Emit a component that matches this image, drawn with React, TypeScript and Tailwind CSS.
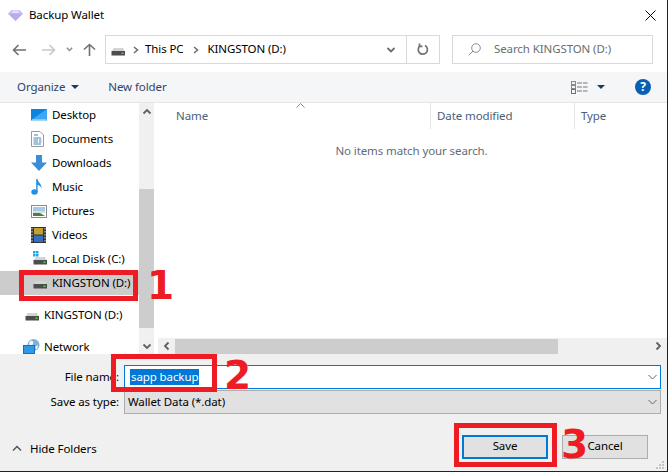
import React from "react";

const Chev = ({ d, className = "", stroke = "#6d6d6d", w = 10, h = 10, sw = 1.6 }: { d: string; className?: string; stroke?: string; w?: number; h?: number; sw?: number }) => (
  <svg width={w} height={h} viewBox="0 0 10 10" className={className} fill="none" stroke={stroke} strokeWidth={sw}>
    <path d={d} />
  </svg>
);

const Drive = ({ windows = false }: { windows?: boolean }) => (
  <svg width="18" height="16" viewBox="0 0 18 16">
    {windows && (
      <g fill="#1ea7e8">
        <rect x="2" y="0" width="2.5" height="2.5" />
        <rect x="5" y="0" width="2.5" height="2.5" />
        <rect x="2" y="3" width="2.5" height="2.5" />
        <rect x="5" y="3" width="2.5" height="2.5" />
      </g>
    )}
    <path d="M3 9 L4.5 6 H14 L15.5 9 Z" fill="#d4d4d4" />
    <rect x="2.5" y="9" width="13.5" height="4.5" fill="#4d4d4d" />
    <rect x="12.5" y="10.5" width="2" height="1.5" fill="#3fdc4a" />
  </svg>
);

const DesktopIcon = () => (
  <svg width="16" height="12" viewBox="0 0 16 12">
    <rect width="16" height="11.5" fill="#0a84e0" />
    <path d="M0 11 L16 0 V11 Z" fill="#39a9f4" />
    <rect x="1" y="10.5" width="14" height="1" fill="#cfeaff" />
  </svg>
);
const DocsIcon = () => (
  <svg width="13" height="16" viewBox="0 0 13 16">
    <path d="M.5.5 H9 L12.5 4 V15.5 H.5 Z" fill="#fff" stroke="#9a9a9a" />
    <path d="M3 4 H7 M2.5 7 H10 M2.5 9 H7 M8 9 H10.5 M2.5 11 H7 M8 11 H10.5 M2.5 13 H10" stroke="#3f87b8" />
  </svg>
);
const DownIcon = () => (
  <svg width="16" height="16" viewBox="0 0 16 16">
    <path d="M5 0 H11 V7.5 H16 L8 16 L0 7.5 H5 Z" fill="#3a8ed8" />
  </svg>
);
const MusicIcon = () => (
  <svg width="12" height="16" viewBox="0 0 12 16">
    <ellipse cx="3.5" cy="13" rx="3.2" ry="2.8" fill="#1e90e8" />
    <path d="M5.2 13 V0 H6.6 C7 4 11 5 10.6 9.5 C10 7 8 6.3 6.6 6 V13 Z" fill="#1e90e8" />
  </svg>
);
const PicIcon = () => (
  <svg width="16" height="13" viewBox="0 0 16 13">
    <rect x=".5" y=".5" width="15" height="12" fill="#fff" stroke="#8a8a8a" />
    <rect x="2" y="2" width="12" height="4" fill="#a9c9e8" />
    <rect x="2" y="6" width="12" height="2" fill="#d6e2c8" />
    <path d="M2 11 V8 L9 8 L14 11 Z" fill="#4e7a52" />
  </svg>
);
const VideoIcon = () => (
  <svg width="15" height="16" viewBox="0 0 15 16">
    <rect width="15" height="16" fill="#333" />
    <rect x="3" y="1" width="9" height="6.5" fill="#c0a030" />
    <rect x="3" y="8.5" width="9" height="6.5" fill="#2f6fc4" />
    <path d="M1 1 V15 M14 1 V15" stroke="#ddd" strokeWidth="1" strokeDasharray="1.5 1.5" />
  </svg>
);
const NetIcon = () => (
  <svg width="19" height="16" viewBox="0 0 19 16">
    <circle cx="10.5" cy="6" r="6" fill="#7fb0d8" />
    <path d="M7 2 C9 1 11 2 10 5 C9 7 6 7 6 5 Z M12 8 L15 6 L14 11 Z" fill="#f2f7fb" />
    <rect x=".5" y="6.5" width="11" height="8" fill="#2f9be8" stroke="#1b6fb4" />
    <rect x="3" y="15" width="6" height="1" fill="#1b6fb4" />
  </svg>
);
const Gem = () => (
  <svg width="15" height="11" viewBox="0 0 15 11">
    <path d="M3.5 0 H11.5 L15 3.5 L7.5 11 L0 3.5 Z" fill="#c9c3f5" />
    <path d="M0 3.5 H15 L7.5 11 Z" fill="#b6adee" />
    <path d="M5 0.5 H10 L11 3 H4 Z" fill="#e4e0fb" />
  </svg>
);

const NavRow = ({ icon, label, iconW = "pl-[31px]", gap = "w-[21px]", active = false, mb = "" }: { icon: React.ReactNode; label: string; iconW?: string; gap?: string; active?: boolean; mb?: string }) => (
  <div className={`flex h-6 shrink-0 items-center ${iconW} ${active ? "bg-[#cccccc]" : ""} ${mb}`}>
    <span className={`flex ${gap} shrink-0 items-center`}>{icon}</span>
    <span className="whitespace-nowrap text-black">{label}</span>
  </div>
);

const Annot = ({ className }: { className: string }) => (
  <div className={`pointer-events-none absolute border-[5px] border-[#ed1c24] ${className}`} />
);
const Digit = ({ children, className }: { children: string; className: string }) => (
  <div className={`pointer-events-none absolute font-['DejaVu_Sans',sans-serif] text-[39px] font-bold leading-none tracking-normal text-[#ed1c24] ${className}`}>{children}</div>
);

export default function App() {
  return (
    <div className="relative flex h-[472px] w-[668px] flex-col overflow-hidden border-r border-b border-[#222222] bg-white font-['Noto_Sans',sans-serif] text-[11.5px] leading-none tracking-[-0.1px]">
      {/* Title bar */}
      <div className="flex h-[30px] shrink-0 items-center pl-2 pr-[10px]">
        <Gem />
        <span className="ml-[6px] text-black">Backup Wallet</span>
        <svg width="11" height="11" viewBox="0 0 11 11" className="ml-auto mr-[1px]" stroke="#000" strokeWidth="1">
          <path d="M.5.5 L10.5 10.5 M10.5.5 L.5 10.5" />
        </svg>
      </div>

      {/* Navigation bar */}
      <div className="flex h-[42px] shrink-0 items-start pt-[5px] pl-3 pr-[14px]">
        <div className="flex h-[29px] w-[93px] items-center">
          <svg width="14" height="12" viewBox="0 0 14 12" fill="none" stroke="#707070" strokeWidth="1.6"><path d="M14 6 H1.5 M6.5 1 L1.5 6 L6.5 11" /></svg>
          <svg width="14" height="12" viewBox="0 0 14 12" fill="none" stroke="#c8c8c8" strokeWidth="1.6" className="ml-[16px]"><path d="M0 6 H12.5 M7.5 1 L12.5 6 L7.5 11" /></svg>
          <Chev d="M2 3 L5 6 L8 3" stroke="#8a8a8a" w={9} h={9} className="ml-[9px]" />
          <svg width="13" height="13" viewBox="0 0 13 13" fill="none" stroke="#707070" strokeWidth="1.6" className="ml-[9px]"><path d="M6.5 13 V1.5 M1 6.5 L6.5 1.5 L12 6.5" /></svg>
        </div>
        <div className="flex h-[29px] w-[335px] items-center border border-[#d9d9d9]">
          <span className="ml-[3px]"><Drive /></span>
          <Chev d="M3 2 L6.5 5 L3 8" stroke="#707070" w={10} h={10} className="ml-[4px]" />
          <span className="ml-[4px] pb-[2px] text-black">This PC</span>
          <Chev d="M3 2 L6.5 5 L3 8" stroke="#707070" w={10} h={10} className="ml-[7px]" />
          <span className="ml-[7px] pb-[2px] text-black">KINGSTON (D:)</span>
          <Chev d="M1.5 3 L5 6.5 L8.5 3" stroke="#6d6d6d" w={10} h={10} sw={1.8} className="ml-auto mr-[10px]" />
          <div className="flex h-full w-[33px] items-center justify-center border-l border-[#d9d9d9]">
            <svg width="12" height="13" viewBox="0 0 12 13" fill="none" stroke="#707070" strokeWidth="1.7"><path d="M8 2.5 A4.6 4.6 0 1 1 3.5 2.6 M2.5 0.5 V3.4 H5.500" /></svg>
          </div>
        </div>
        <div className="ml-[12px] flex h-[29px] flex-1 items-center border border-[#d9d9d9] pl-[15px] text-[#6d6d6d]">
          <svg width="13" height="13" viewBox="0 0 13 13" fill="none" stroke="#8c8c8c" strokeWidth="1"><circle cx="8" cy="5" r="4.3" /><path d="M5 8 L.7 12.3" /></svg>
          <span className="ml-[13px] pb-[2px]">Search KINGSTON (D:)</span>
        </div>
      </div>

      {/* Toolbar */}
      <div className="flex h-[31px] shrink-0 items-center border-b border-[#e5e5e5] bg-[#f5f6f7] pl-[17px] pr-[16px] text-[#2f4468]">
        <span>Organize</span>
        <svg width="8" height="4" viewBox="0 0 8 4" className="ml-[6px]"><path d="M0 0 H8 L4 4 Z" fill="#1e3a5f" /></svg>
        <span className="ml-[29px]">New folder</span>
        <svg width="17" height="13" viewBox="0 0 17 13" className="ml-auto" fill="none">
          <rect x=".5" y=".5" width="4" height="3" stroke="#8a8a8a" />
          <rect x=".5" y="4.5" width="4" height="3" stroke="#8a8a8a" />
          <rect x=".5" y="8.500" width="4" height="4" stroke="#c05050" />
          <path d="M6 2 H11 M12 2 H16.500 M6 6 H11 M12 6 H16.500 M6 10 H11 M12 10 H16.500" stroke="#777" />
        </svg>
        <svg width="8" height="4" viewBox="0 0 8 4" className="ml-[9px]"><path d="M0 0 H8 L4 4 Z" fill="#1e3a5f" /></svg>
        <span className="ml-[30px] flex h-4 w-4 items-center justify-center rounded-full bg-[#0a5fb4] text-[12px] font-bold text-white">?</span>
      </div>

      {/* Main area */}
      <div className="flex min-h-0 flex-1">
        {/* Nav pane */}
        <div className="flex h-[251px] w-[139px] shrink-0 flex-col overflow-hidden">
          <NavRow icon={<DesktopIcon />} label="Desktop" />
          <NavRow icon={<DocsIcon />} label="Documents" />
          <NavRow icon={<DownIcon />} label="Downloads" />
          <NavRow icon={<MusicIcon />} label="Music" />
          <NavRow icon={<PicIcon />} label="Pictures" />
          <NavRow icon={<VideoIcon />} label="Videos" />
          <NavRow icon={<Drive windows />} label="Local Disk (C:)" />
          <NavRow icon={<Drive />} label="KINGSTON (D:)" active mb="mb-2" />
          <NavRow icon={<Drive />} label="KINGSTON (D:)" iconW="pl-[23px]" mb="mb-2" />
          <NavRow icon={<NetIcon />} label="Network" iconW="pl-[23px]" />
        </div>
        {/* Nav scrollbar */}
        <div className="flex h-[251px] w-[15px] shrink-0 flex-col bg-[#f0f0f0]">
          <div className="flex h-[17px] items-center justify-center"><Chev d="M1.500 6.500 L5 3 L8.500 6.500" stroke="#606060" sw={1.8} /></div>
          <div className="mt-[69px] h-[139px] bg-[#cdcdcd]" />
          <div className="mt-auto flex h-[17px] items-center justify-center"><Chev d="M1.500 3.500 L5 7 L8.500 3.500" stroke="#606060" sw={1.8} /></div>
        </div>
        <div className="w-[4px] shrink-0" />
        {/* File list */}
        <div className="flex h-[251px] min-w-0 flex-1 flex-col">
          <div className="flex h-[26px] shrink-0 items-center text-[#4c607a]">
            <div className="relative flex h-full w-[273px] items-center border-r border-[#e5e5e5] pl-[18px]">
              Name
              <svg width="9" height="5" viewBox="0 0 9 5" fill="none" stroke="#888" className="absolute left-[138px] top-0"><path d="M.5 4.500 L4.500 .5 L8.500 4.500" /></svg>
            </div>
            <div className="flex h-full w-[144px] items-center border-r border-[#e5e5e5] pl-[6px]">Date modified</div>
            <div className="pl-[6px]">Type</div>
          </div>
          <div className="flex-1 pt-[16px] text-center text-[#5f6b7a]">
            <span className="-ml-[2px] inline-block">No items match your search.</span>
          </div>
          <div className="flex h-[16px] shrink-0 items-center bg-[#f0f0f0]">
            <div className="flex w-[17px] justify-center"><Chev d="M6.500 1.500 L3 5 L6.500 8.500" stroke="#606060" sw={1.8} /></div>
            <div className="h-[15px] w-[383px] bg-[#cdcdcd]" />
            <div className="ml-auto mr-[1px] flex w-[17px] justify-center"><Chev d="M3.500 1.500 L7 5 L3.500 8.500" stroke="#606060" sw={1.8} /></div>
          </div>
        </div>
      </div>

      {/* Save panel */}
      <div className="relative flex h-[117px] shrink-0 flex-col bg-[#f0f0f0] pt-[11px] pr-[6px]">
        <div className="flex h-[24px] items-center">
          <span className="w-[120px] pr-[1px] text-right text-black">File name:</span>
          <div className="ml-[4px] flex h-[24px] flex-1 items-center border border-[#0078d7] bg-white pl-[5px]">
            <span className="flex h-[16px] items-center bg-[#0078d7] px-[1px] text-white">sapp backup</span>
            <Chev d="M1 3 L5 7 L9 3" stroke="#666" sw={1} w={11} h={10} className="ml-auto mr-[2px]" />
          </div>
        </div>
        <div className="mt-[1px] flex h-[24px] items-center">
          <span className="w-[120px] pr-[1px] text-right text-black">Save as type:</span>
          <div className="ml-[4px] flex h-[24px] flex-1 items-center border border-[#adadad] bg-[#e1e1e1] pl-[3px] text-black">
            Wallet Data (*.dat)
            <Chev d="M1 3 L5 7 L9 3" stroke="#666" sw={1} w={11} h={10} className="ml-auto mr-[2px]" />
          </div>
        </div>
        <div className="mt-auto flex items-start pb-[12px] pl-[12px]">
          <div className="mt-[8px] flex items-center">
            <Chev d="M1 6.500 L5 2.500 L9 6.500" stroke="#555" sw={1.5} />
            <span className="ml-[8px] text-black">Hide Folders</span>
          </div>
          <div className="ml-auto flex h-[24px] w-[86px] items-center justify-center border-2 border-[#0078d7] bg-[#e1e1e1] pb-[2px] text-black">Save</div>
          <div className="ml-[14px] mr-[13px] flex h-[24px] w-[86px] items-center justify-center border border-[#adadad] bg-[#e1e1e1] pb-[2px] text-black">Cancel</div>
        </div>
        <svg width="9" height="9" viewBox="0 0 9 9" className="absolute bottom-[1px] right-[2px]" fill="#c4c4c4">
          <rect x="6" y="0" width="2" height="2" /><rect x="3" y="3" width="2" height="2" /><rect x="6" y="3" width="2" height="2" />
          <rect x="0" y="6" width="2" height="2" /><rect x="3" y="6" width="2" height="2" /><rect x="6" y="6" width="2" height="2" />
        </svg>
      </div>

      {/* Tutorial annotations */}
      <Annot className="left-[19px] top-[270px] h-[31px] w-[119px]" />
      <Digit className="left-[147px] top-[266px]">1</Digit>
      <Annot className="left-[111px] top-[354px] h-[38px] w-[106px]" />
      <Digit className="left-[224px] top-[356px]">2</Digit>
      <Annot className="left-[454px] top-[423px] h-[44px] w-[103px]" />
      <Digit className="left-[561px] top-[425px]">3</Digit>
    </div>
  );
}
